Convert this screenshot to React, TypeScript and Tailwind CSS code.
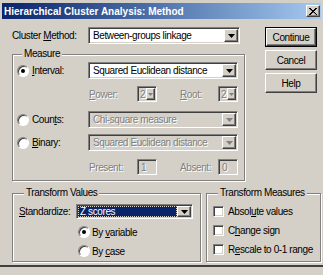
import type { ReactNode } from "react";

const sunken =
  "border border-t-[#808080] border-l-[#808080] border-r-white border-b-white shadow-[inset_1px_1px_0_#404040,inset_-1px_-1px_0_#d4d0c8]";
const raised =
  "border border-t-white border-l-white border-r-[#404040] border-b-[#404040] shadow-[inset_-1px_-1px_0_#808080]";
const grayText = "text-[#808080] [text-shadow:1px_1px_0_#fff]";

function Arrow({ disabled = false, small = false }: { disabled?: boolean; small?: boolean }) {
  return (
    <div
      className={`flex h-full shrink-0 items-center justify-center bg-[#d4d0c8] ${raised} ${
        small ? "w-[9px]" : "w-[14px]"
      }`}
    >
      <svg width={small ? 5 : 7} height={small ? 3 : 4} viewBox="0 0 7 4">
        <path d="M0 0h7L3.5 4z" fill={disabled ? "#808080" : "#000"} />
      </svg>
    </div>
  );
}

function Combo({
  text,
  className,
  disabled = false,
  selected = false,
  small = false,
}: {
  text: string;
  className: string;
  disabled?: boolean;
  selected?: boolean;
  small?: boolean;
}) {
  return (
    <div
      className={`flex p-[1px] ${sunken} ${disabled ? "bg-[#d4d0c8]" : "bg-white"} ${className}`}
    >
      <div className="flex min-w-0 flex-1 items-center overflow-hidden whitespace-nowrap">
        {selected ? (
          <span className="flex h-full w-full items-center bg-[#0a246a] pl-[2px] text-white outline-1 outline-dotted outline-offset-[-1px] outline-[#d4d0c8]">
            {text}
          </span>
        ) : (
          <span className={`${small ? "pl-[1px]" : "pl-[3px]"} ${disabled ? grayText : ""}`}>
            {text}
          </span>
        )}
      </div>
      <Arrow disabled={disabled} small={small} />
    </div>
  );
}

function Radio({ checked = false }: { checked?: boolean }) {
  return (
    <div className="flex h-[12px] w-[12px] shrink-0 items-center justify-center rounded-full border border-t-[#808080] border-l-[#808080] border-r-white border-b-white bg-white shadow-[inset_1px_1px_0_#404040]">
      {checked && <div className="h-[4px] w-[4px] rounded-full bg-black" />}
    </div>
  );
}

function Check() {
  return <div className={`h-[11px] w-[11px] shrink-0 bg-white ${sunken}`} />;
}

function Group({
  title,
  className,
  children,
}: {
  title: string;
  className: string;
  children: ReactNode;
}) {
  return (
    <fieldset
      className={`border border-[#808080] shadow-[inset_1px_1px_0_#fff,1px_1px_0_#fff] ${className}`}
    >
      <legend className="ml-[5px] bg-[#d4d0c8] px-[2px] leading-[12px]">{title}</legend>
      {children}
    </fieldset>
  );
}

function Button({ children, primary = false }: { children: ReactNode; primary?: boolean }) {
  return (
    <div className={`h-[20px] w-[52px] ${primary ? "border border-black" : ""}`}>
      <div
        className={`flex h-full w-full items-center justify-center bg-[#d4d0c8] ${raised}`}
      >
        {children}
      </div>
    </div>
  );
}

export default function App() {
  return (
    <div className="h-[275px] w-[323px] overflow-hidden bg-[#d4d0c8] px-[2px] pt-[3px] font-['Liberation_Sans',Arial,sans-serif] text-[10px] tracking-[-0.4px] text-black">
      {/* title bar */}
      <div className="flex h-[16px] items-center justify-between bg-linear-to-r from-[#0a246a] to-[#a6caf0] pl-[2px] pr-[1px]">
        <span className="text-[10px] font-bold tracking-normal text-white">
          Hierarchical Cluster Analysis: Method
        </span>
        <div className={`flex h-[12px] w-[14px] items-center justify-center bg-[#d4d0c8] ${raised}`}>
          <svg width="8" height="7" viewBox="0 0 8 7">
            <path d="M0 0l8 7M1 0l7 7M7 0L0 7M8 0L1 7" stroke="#000" strokeWidth="1" />
          </svg>
        </div>
      </div>

      <div className="flex flex-col pl-[10px]">
        <div className="mt-[8px] flex">
          <div className="w-[233px]">
            <div className="flex h-[17px] items-center">
              <span className="w-[76px]">
                Cluster <span className="underline">M</span>ethod:
              </span>
              <Combo text="Between-groups linkage" className="h-[17px] w-[152px]" />
            </div>

            <Group title="Measure" className="mt-[4px] w-[233px] pb-[5px] pl-[4px] pr-[6px]">
              <div className="mt-[2px] flex h-[17px] items-center">
                <div className="flex w-[71px] items-center gap-[3px]">
                  <Radio checked />
                  <span>
                    <span className="underline">I</span>nterval:
                  </span>
                </div>
                <Combo text="Squared Euclidean distance" className="h-[17px] w-[150px]" />
              </div>

              <div className={`mt-[7px] flex h-[16px] items-center pl-[72px] ${grayText}`}>
                <span className="w-[48px]">
                  <span className="underline">P</span>ower:
                </span>
                <Combo text="2" disabled small className="h-[16px] w-[20px] [text-shadow:none]" />
                <span className="ml-[23px] w-[38px]">
                  <span className="underline">R</span>oot:
                </span>
                <Combo text="2" disabled small className="h-[16px] w-[20px] [text-shadow:none]" />
              </div>

              <div className="mt-[9px] flex h-[17px] items-center">
                <div className="flex w-[71px] items-center gap-[3px]">
                  <Radio />
                  <span>
                    Coun<span className="underline">t</span>s:
                  </span>
                </div>
                <Combo text="Chi-square measure" disabled className="h-[17px] w-[150px]" />
              </div>

              <div className="mt-[6px] flex h-[17px] items-center">
                <div className="flex w-[71px] items-center gap-[3px]">
                  <Radio />
                  <span>
                    <span className="underline">B</span>inary:
                  </span>
                </div>
                <Combo text="Squared Euclidean distance" disabled className="h-[17px] w-[150px]" />
              </div>

              <div className={`mt-[8px] flex h-[16px] items-center pl-[72px] ${grayText}`}>
                <span className="w-[48px]">Present:</span>
                <div className={`flex h-[16px] w-[20px] items-center pl-[3px] ${sunken}`}>1</div>
                <span className="ml-[23px] w-[38px]">Absent:</span>
                <div className={`flex h-[16px] w-[20px] items-center pl-[3px] ${sunken}`}>0</div>
              </div>
            </Group>
          </div>

          <div className="ml-[20px] flex flex-col gap-[3px]">
            <Button primary>Continue</Button>
            <Button>Cancel</Button>
            <Button>Help</Button>
          </div>
        </div>

        <div className="mt-[6px] flex gap-[5px]">
          <Group title="Transform Values" className="w-[189px] pb-[4px] pl-[6px]">
            <div className="mt-[5px] flex h-[15px] items-center">
              <span className="w-[57px]">
                <span className="underline">S</span>tandardize:
              </span>
              <Combo text="Z scores" selected className="h-[15px] w-[117px]" />
            </div>
            <div className="mt-[7px] flex h-[12px] items-center gap-[1px] pl-[59px]">
              <Radio checked />
              <span className="ml-[1px]">
                By <span className="underline">v</span>ariable
              </span>
            </div>
            <div className="mt-[7px] flex h-[12px] items-center gap-[1px] pl-[59px]">
              <Radio />
              <span className="ml-[1px]">
                By <span className="underline">c</span>ase
              </span>
            </div>
          </Group>

          <Group title="Transform Measures" className="w-[115px] pb-[6px] pl-[6px]">
            <div className="mt-[7px] flex h-[11px] items-center gap-[4px]">
              <Check />
              <span>
                Absol<span className="underline">u</span>te values
              </span>
            </div>
            <div className="mt-[8px] flex h-[11px] items-center gap-[4px]">
              <Check />
              <span>
                C<span className="underline">h</span>ange sign
              </span>
            </div>
            <div className="mt-[8px] flex h-[11px] items-center gap-[4px]">
              <Check />
              <span>
                R<span className="underline">e</span>scale to 0-1 range
              </span>
            </div>
          </Group>
        </div>
      </div>

      <div className="-mx-[2px] mt-[3px] h-[2px] bg-[#404040]" />
    </div>
  );
}
